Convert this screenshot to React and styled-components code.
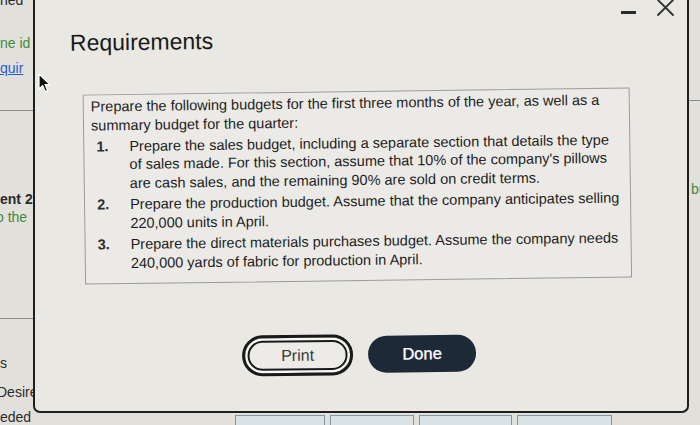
import React from 'react'
import styled, { createGlobalStyle } from 'styled-components'

const GlobalStyle = createGlobalStyle`
    html, body {
        margin: 0;
        padding: 0;
        background: #dddcd7;
    }
    body {
        font-family: "Liberation Sans", Arial, sans-serif;
    }
`

const Screen = styled.div`
    position: relative;
    width: 700px;
    height: 425px;
    overflow: hidden;
    display: grid;
    grid-template-columns: 33px 656px 11px;
    grid-template-rows: 413px 12px;
    background: #e1e0db;
`

const SidePage = styled.div`
    grid-column: ${p => p.$col};
    grid-row: 1 / 3;
    overflow: hidden;
    display: flex;
    flex-direction: column;
    font-size: 14px;
    line-height: 16px;
    color: #2b2b2b;
    white-space: nowrap;
`

const Fragment = styled.span`
    display: block;
    margin-top: ${p => p.$top}px;
    margin-left: ${p => p.$left || 0}px;
    color: ${p => p.$color || '#2b2b2b'};
    font-weight: ${p => (p.$bold ? 700 : 400)};
    text-decoration: ${p => (p.$link ? 'underline' : 'none')};
`

const Divider = styled.div`
    flex: none;
    height: 1px;
    margin-top: ${p => p.$top}px;
    background: #8d8d8a;
`

const BottomPage = styled.div`
    grid-column: 2;
    grid-row: 2;
    display: flex;
    align-items: flex-start;
    gap: 5px;
    padding: 2px 0 0 202px;
`

const Cell = styled.div`
    width: ${p => p.$w}px;
    height: 12px;
    border: 1px solid #7f97a6;
    border-bottom: none;
    background: #d9e2e5;
`

const Dialog = styled.div`
    grid-column: 2;
    grid-row: 1;
    display: flex;
    flex-direction: column;
    background: #e9e8e3;
    border: 2px solid #1f1f1f;
    border-top: none;
    border-radius: 0 0 7px 7px;
`

const Controls = styled.div`
    display: flex;
    justify-content: flex-end;
    align-items: flex-start;
    gap: 21px;
    height: 18px;
    padding-right: 13px;
`

const Minimize = styled.span`
    width: 15px;
    height: 3px;
    margin-top: 11px;
    background: #2b2b2b;
`

const Content = styled.div`
    display: flex;
    flex-direction: column;
    transform: rotate(-0.75deg);
    transform-origin: 50% 50%;
`

const Title = styled.h1`
    margin: 8px 0 0 37px;
    font-size: 23px;
    line-height: 27px;
    font-weight: 400;
    color: #1a1a1a;
`

const RequirementsBox = styled.div`
    margin: 38px 56px 0 49px;
    padding: 2px 6px 11px 7px;
    border: 1px solid #9b9b9a;
    background: #ebeae6;
    font-size: 14.5px;
    line-height: 18.5px;
    color: #1e1e1e;
`

const Intro = styled.p`
    margin: 0;
`

const List = styled.ol`
    list-style: none;
    margin: 2.5px 0 0;
    padding: 0;
`

const Item = styled.li`
    display: grid;
    grid-template-columns: 38px 1fr;
    margin-top: ${p => (p.$first ? 0 : 3)}px;
`

const Num = styled.span`
    padding-left: 5px;
    font-weight: 700;
    color: #2e2e2e;
`

const ButtonRow = styled.div`
    display: flex;
    justify-content: center;
    align-items: center;
    gap: 15px;
    margin-top: 53px;
    padding-right: 8px;
`

const PrintButton = styled.button`
    box-sizing: border-box;
    width: 111px;
    height: 41px;
    border-radius: 21px;
    border: 3px solid #1a1a1a;
    box-shadow: inset 0 0 0 2.5px #f7f7f5, inset 0 0 0 4.5px #1a1a1a;
    background: #ecebe7;
    font-family: inherit;
    font-size: 16px;
    color: #3a3a3a;
`

const DoneButton = styled.button`
    box-sizing: border-box;
    width: 108px;
    height: 37px;
    border-radius: 19px;
    border: none;
    background: #1e2938;
    font-family: inherit;
    font-size: 16.5px;
    color: #fff;
    -webkit-text-stroke: 0.35px #fff;
`

const Cursor = styled.svg`
    position: absolute;
    left: 38px;
    top: 73px;
`

const App = () => {
  return (
    <>
      <GlobalStyle />
      <Screen>
        <SidePage $col={1}>
          <Fragment $top={-8}>ned</Fragment>
          <Fragment $top={27} $color="#3f8a3f">ne id</Fragment>
          <Fragment $top={9} $color="#2a5bd7" $link>quir</Fragment>
          <Divider $top={34} />
          <Fragment $top={80} $bold>ent 2</Fragment>
          <Fragment $top={2} $left={-4} $color="#3f8a3f">o the</Fragment>
          <Divider $top={93} />
          <Fragment $top={36}>s</Fragment>
          <Fragment $top={13} $left={-3}>Desired</Fragment>
          <Fragment $top={9}>eded</Fragment>
        </SidePage>

        <Dialog>
          <Controls>
            <Minimize />
            <svg width="17" height="17" viewBox="0 0 17 17" style={{ marginTop: -1 }}>
              <path d="M1 1 L16 16 M16 1 L1 16" stroke="#333" strokeWidth="1.8" strokeLinecap="round" />
            </svg>
          </Controls>
          <Content>
            <Title>Requirements</Title>
            <RequirementsBox>
              <Intro>
                Prepare the following budgets for the first three months of the year, as well as a summary budget for the quarter:
              </Intro>
              <List>
                <Item $first>
                  <Num>1.</Num>
                  <span>
                    Prepare the sales budget, including a separate section that details the type of sales made. For this section, assume that 10% of the company's pillows are cash sales, and the remaining 90% are sold on credit terms.
                  </span>
                </Item>
                <Item>
                  <Num>2.</Num>
                  <span>
                    Prepare the production budget. Assume that the company anticipates selling 220,000 units in April.
                  </span>
                </Item>
                <Item>
                  <Num>3.</Num>
                  <span>
                    Prepare the direct materials purchases budget. Assume the company needs 240,000 yards of fabric for production in April.
                  </span>
                </Item>
              </List>
            </RequirementsBox>
            <ButtonRow>
              <PrintButton>Print</PrintButton>
              <DoneButton>Done</DoneButton>
            </ButtonRow>
          </Content>
        </Dialog>

        <SidePage $col={3}>
          <Divider $top={100} />
          <Fragment $top={80} $left={2} $color="#3f8a3f">bu</Fragment>
        </SidePage>

        <BottomPage>
          <Cell $w={88} />
          <Cell $w={82} />
          <Cell $w={91} />
          <Cell $w={93} />
        </BottomPage>

        <Cursor width="13" height="20" viewBox="0 0 13 20">
          <path d="M1 1 L1 16 L4.6 12.6 L7.2 18.6 L9.6 17.6 L7 11.6 L12 11.6 Z" fill="#111" stroke="#fff" strokeWidth="1.2" strokeLinejoin="round" />
        </Cursor>
      </Screen>
    </>
  )
}

export default App
